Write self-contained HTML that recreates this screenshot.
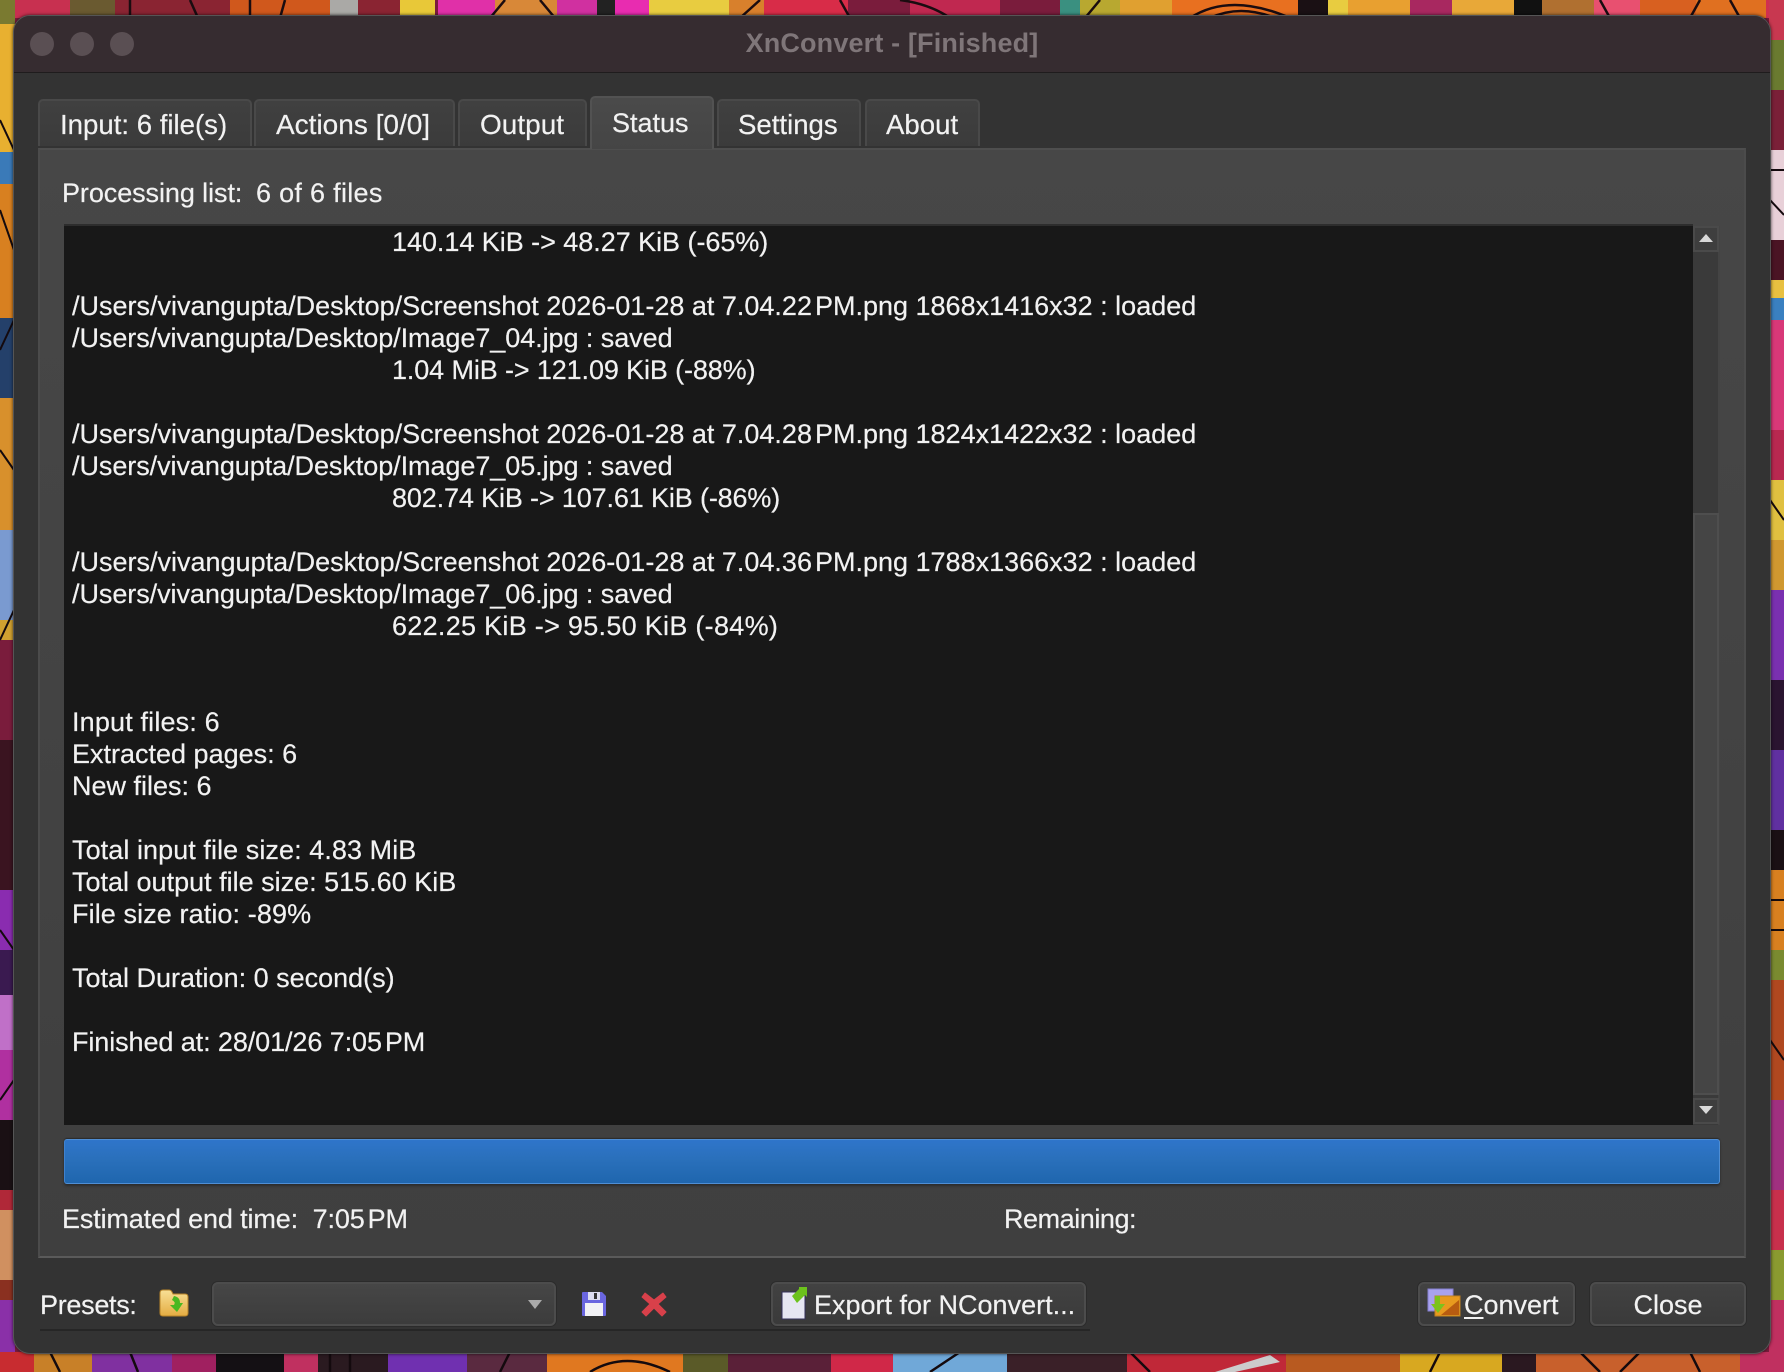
<!DOCTYPE html>
<html><head><meta charset="utf-8"><title>XnConvert</title>
<style>
html,body{margin:0;padding:0;background:#222;}
body{width:1784px;height:1372px;position:relative;overflow:hidden;font-family:"Liberation Sans",sans-serif;font-size:27px;color:#f2f2f2;}
.bg{position:absolute;left:0;top:0;}
.win{position:absolute;left:14px;top:16px;width:1756px;height:1337px;border-radius:16px;background:#333;box-shadow:0 0 0 1px #555,0 0 3px 1px rgba(0,0,0,.7);overflow:hidden;}
.tb{position:absolute;left:0;top:0;width:100%;height:56px;background:#362c30;border-bottom:1.5px solid #1f1c1d;}
.dot{position:absolute;top:16px;width:24px;height:24px;border-radius:50%;background:#5a4f53;}
.title{position:absolute;left:0;right:0;top:11px;text-align:center;color:#7f7679;font-weight:bold;line-height:32px;letter-spacing:.15px;}
.a{position:absolute;white-space:pre;line-height:32px;-webkit-text-stroke:.2px #f2f2f2;}
.tab{position:absolute;top:99px;height:47px;box-sizing:border-box;background:linear-gradient(#404040,#3b3b3b);border:2px solid #494949;border-bottom:none;border-radius:5px 5px 0 0;}
.tab.s{top:96px;height:53px;background:linear-gradient(#4a4a4a,#454545);border-color:#525252;z-index:3;}
.tt{font-size:27.6px;}
.panel{position:absolute;left:38px;top:148px;width:1708px;height:1110px;box-sizing:border-box;background:linear-gradient(#474747,#3f3f3f);border:2px solid #4b4b4b;border-top:2px solid #4e4e4e;border-bottom:2px solid #5a5a5a;}
.log{position:absolute;left:64px;top:226px;width:1629px;height:899px;background:#181818;box-shadow:0 -2px 0 #2d2d2d;}
.sb{position:absolute;left:1693px;top:226px;width:27px;height:899px;background:#3a3a3a;box-shadow:inset -2px 0 0 #444;}
.thumb{position:absolute;left:1693px;top:513px;width:26px;height:582px;box-sizing:border-box;background:#454545;border:2px solid #4e4e4e;}
.sbtn{position:absolute;left:1693px;width:26px;height:26px;box-sizing:border-box;background:#3e3e3e;border:2px solid #4a4a4a;}
.bar{position:absolute;left:64px;top:1139px;width:1656px;height:45px;box-sizing:border-box;border-radius:3px;background:linear-gradient(#2f75ca,#2a70bb 45%,#1f66ae);border:1.5px solid #4f8ed4;border-left-color:#3f82cf;box-shadow:0 -1px 1px #2a2a2a,0 2px 2px #2c2c2c;}
.btn{position:absolute;top:1282px;height:44px;box-sizing:border-box;border-radius:6px;background:linear-gradient(#424242,#3a3a3a);border:2px solid #4c4c4c;box-shadow:0 0 0 1px #2b2b2b;}
.line{position:absolute;left:40px;top:1329px;width:1050px;height:2px;background:#262626;}
svg.ic{position:absolute;}
</style></head>
<body>
<svg class="bg" width="1784" height="1372" viewBox="0 0 1784 1372" xmlns="http://www.w3.org/2000/svg">
<rect width="1784" height="1372" fill="#7a1c3c"/>
<g>
<rect x="0" y="0" width="70" height="18" fill="#c83050"/><rect x="70" y="0" width="45" height="18" fill="#6a5a30"/><rect x="115" y="0" width="115" height="18" fill="#8a2432"/><rect x="230" y="0" width="100" height="18" fill="#d0581c"/><rect x="330" y="0" width="28" height="18" fill="#aaa9a6"/><rect x="358" y="0" width="42" height="18" fill="#8a2432"/><rect x="400" y="0" width="35" height="18" fill="#e8c838"/><rect x="438" y="0" width="57" height="18" fill="#e030a8"/><rect x="495" y="0" width="62" height="18" fill="#d88838"/><rect x="557" y="0" width="40" height="18" fill="#d030a0"/><rect x="597" y="0" width="18" height="18" fill="#222"/><rect x="615" y="0" width="34" height="18" fill="#e82cb0"/><rect x="649" y="0" width="80" height="18" fill="#e8cc40"/><rect x="729" y="0" width="35" height="18" fill="#d8802c"/><rect x="764" y="0" width="84" height="18" fill="#d82c48"/><rect x="848" y="0" width="62" height="18" fill="#7a1c3c"/><rect x="910" y="0" width="90" height="18" fill="#c02850"/><rect x="1000" y="0" width="60" height="18" fill="#7a1c3c"/><rect x="1060" y="0" width="20" height="18" fill="#3a9080"/><rect x="1080" y="0" width="40" height="18" fill="#b8a830"/><rect x="1120" y="0" width="52" height="18" fill="#e0a030"/><rect x="1172" y="0" width="126" height="18" fill="#e87020"/><rect x="1298" y="0" width="30" height="18" fill="#1a1014"/><rect x="1328" y="0" width="20" height="18" fill="#e8cc40"/><rect x="1348" y="0" width="62" height="18" fill="#e8a030"/><rect x="1410" y="0" width="42" height="18" fill="#a82860"/><rect x="1452" y="0" width="62" height="18" fill="#e8a838"/><rect x="1514" y="0" width="28" height="18" fill="#111"/><rect x="1542" y="0" width="52" height="18" fill="#b07030"/><rect x="1594" y="0" width="46" height="18" fill="#e85070"/><rect x="1640" y="0" width="56" height="18" fill="#d86020"/><rect x="1696" y="0" width="70" height="18" fill="#e07020"/><rect x="1766" y="0" width="18" height="18" fill="#d03050"/>
</g>
<g stroke="#1a0c10" stroke-width="2.5" fill="none">
<path d="M130 0V18M190 0L198 18M250 0V18M285 0L280 18M505 0L490 18M540 0L555 18M760 0L740 18M840 0L850 18M900 0Q930 4 950 18M1190 18Q1230 -8 1290 18M1210 18Q1240 4 1275 18M1100 0L1085 18M1600 0L1610 18M1700 0L1690 18M1730 0L1740 18"/>
</g>
<g>
<rect x="0" y="1352" width="34" height="20" fill="#c82c30"/><rect x="34" y="1352" width="58" height="20" fill="#c88028"/><rect x="92" y="1352" width="80" height="20" fill="#8030a0"/><rect x="172" y="1352" width="44" height="20" fill="#a02060"/><rect x="216" y="1352" width="68" height="20" fill="#141014"/><rect x="284" y="1352" width="34" height="20" fill="#c03060"/><rect x="318" y="1352" width="70" height="20" fill="#2a1a20"/><rect x="388" y="1352" width="79" height="20" fill="#7030b0"/><rect x="467" y="1352" width="80" height="20" fill="#5a2a40"/><rect x="547" y="1352" width="136" height="20" fill="#e07820"/><rect x="683" y="1352" width="45" height="20" fill="#5a5a28"/><rect x="728" y="1352" width="103" height="20" fill="#5a2038"/><rect x="831" y="1352" width="62" height="20" fill="#d02848"/><rect x="893" y="1352" width="114" height="20" fill="#70a8d8"/><rect x="1007" y="1352" width="120" height="20" fill="#3a2028"/><rect x="1127" y="1352" width="159" height="20" fill="#c02838"/><path d="M1215 1372L1270 1355L1280 1362L1235 1372Z" fill="#cccccc"/><rect x="1286" y="1352" width="114" height="20" fill="#b85a20"/><rect x="1400" y="1352" width="102" height="20" fill="#d8a820"/><rect x="1502" y="1352" width="34" height="20" fill="#2a1820"/><rect x="1536" y="1352" width="204" height="20" fill="#c8602c"/><rect x="1740" y="1352" width="44" height="20" fill="#c03060"/>
</g>
<g stroke="#140a0e" stroke-width="2.5" fill="none">
<path d="M50 1352L60 1372M130 1352L138 1372M330 1352V1372M350 1352V1372M510 1352L500 1372M590 1372Q625 1350 670 1372M960 1352L930 1372M1130 1352L1150 1372M1440 1352L1430 1372M1580 1352L1600 1372M1640 1352L1620 1372M1690 1352L1700 1372"/>
</g>
<g>
<rect x="0" y="0" width="15" height="24" fill="#7a7a30"/><rect x="0" y="24" width="15" height="128" fill="#e8b030"/><rect x="0" y="152" width="15" height="32" fill="#3a7ab8"/><rect x="0" y="184" width="15" height="134" fill="#d88020"/><rect x="0" y="318" width="15" height="80" fill="#24406a"/><rect x="0" y="398" width="15" height="132" fill="#d8902c"/><rect x="0" y="530" width="15" height="90" fill="#7a9ad0"/><rect x="0" y="620" width="15" height="20" fill="#d0a030"/><rect x="0" y="640" width="15" height="100" fill="#7a1c3c"/><rect x="0" y="740" width="15" height="150" fill="#3a1420"/><rect x="0" y="890" width="15" height="60" fill="#8a2cb0"/><rect x="0" y="950" width="15" height="45" fill="#3a1a50"/><rect x="0" y="995" width="15" height="55" fill="#c070c8"/><rect x="0" y="1050" width="15" height="70" fill="#b030a0"/><rect x="0" y="1120" width="15" height="70" fill="#1a1014"/><rect x="0" y="1190" width="15" height="20" fill="#b02838"/><rect x="0" y="1210" width="15" height="70" fill="#d09060"/><rect x="0" y="1280" width="15" height="20" fill="#8a3020"/><rect x="0" y="1300" width="15" height="52" fill="#8a30a8"/>
</g>
<g>
<rect x="1769" y="0" width="15" height="40" fill="#c83850"/><rect x="1769" y="40" width="15" height="50" fill="#6a7a30"/><rect x="1769" y="90" width="15" height="60" fill="#7a2038"/><rect x="1769" y="150" width="15" height="90" fill="#e8d0d8"/><rect x="1769" y="240" width="15" height="40" fill="#4a1424"/><rect x="1769" y="280" width="15" height="18" fill="#e8c040"/><rect x="1769" y="298" width="15" height="22" fill="#3a80c0"/><rect x="1769" y="320" width="15" height="110" fill="#d83878"/><rect x="1769" y="430" width="15" height="50" fill="#b82850"/><rect x="1769" y="480" width="15" height="60" fill="#e0c040"/><rect x="1769" y="540" width="15" height="50" fill="#d09830"/><rect x="1769" y="590" width="15" height="90" fill="#7a30b0"/><rect x="1769" y="680" width="15" height="70" fill="#2a1430"/><rect x="1769" y="750" width="15" height="80" fill="#6030a0"/><rect x="1769" y="830" width="15" height="40" fill="#1a1014"/><rect x="1769" y="870" width="15" height="80" fill="#d88020"/><rect x="1769" y="950" width="15" height="30" fill="#7a8a30"/><rect x="1769" y="980" width="15" height="120" fill="#b04820"/><rect x="1769" y="1100" width="15" height="90" fill="#a03080"/><rect x="1769" y="1190" width="15" height="60" fill="#c8304c"/><rect x="1769" y="1250" width="15" height="50" fill="#8a9a30"/><rect x="1769" y="1300" width="15" height="72" fill="#c03060"/>
</g>
<g stroke="#140a0e" stroke-width="2" fill="none">
<path d="M0 120L14 150M0 210L14 250M0 350L14 320M0 450L14 470M0 640L14 610M0 930L14 950M0 1100L14 1080M1770 170H1784M1770 200L1784 215M1770 500L1784 520M1770 900H1784M1770 930H1784M1770 1040L1784 1060"/>
</g>
</svg>

<div class="win">
<div class="tb"></div>
<div class="dot" style="left:16px"></div><div class="dot" style="left:56px"></div><div class="dot" style="left:96px"></div>
<div class="title">XnConvert - [Finished]</div>
</div>

<div class="tab" style="left:38px;width:214px"></div>
<div class="tab" style="left:254px;width:201px"></div>
<div class="tab" style="left:458px;width:129px"></div>
<div class="tab s" style="left:590px;width:124px"></div>
<div class="tab" style="left:717px;width:144px"></div>
<div class="tab" style="left:865px;width:115px"></div>
<div class="panel"></div>

<div class="a tt" style="left:60px;top:109px;z-index:4">Input: 6 file(s)</div>
<div class="a tt" style="left:276px;top:109px;z-index:4;font-size:28px">Actions [0/0]</div>
<div class="a tt" style="left:480px;top:109px;z-index:4;font-size:28px">Output</div>
<div class="a" style="left:612px;top:107px;z-index:4">Status</div>
<div class="a tt" style="left:738px;top:109px;z-index:4">Settings</div>
<div class="a tt" style="left:886px;top:109px;z-index:4">About</div>

<div class="a" style="left:62px;top:177px;letter-spacing:-.08px">Processing list:</div>
<div class="a" style="left:256px;top:177px;letter-spacing:.3px">6 of 6 files</div>

<div class="log"></div>
<div class="a" style="left:72px;top:226px;width:1620px;height:898px;overflow:hidden"><span style="margin-left:320px;letter-spacing:-.04px">140.14 KiB -&gt; 48.27 KiB (-65%)</span>

/Users/vivangupta/Desktop/Screenshot 2026-01-28 at 7.04.22<span style="margin-left:3px">PM</span>.png 1868x1416x32 : loaded
<span style="letter-spacing:-.06px">/Users/vivangupta/Desktop/Image7_04.jpg : saved</span>
<span style="margin-left:320px;letter-spacing:-.12px">1.04 MiB -&gt; 121.09 KiB (-88%)</span>

/Users/vivangupta/Desktop/Screenshot 2026-01-28 at 7.04.28<span style="margin-left:3px">PM</span>.png 1824x1422x32 : loaded
<span style="letter-spacing:-.06px">/Users/vivangupta/Desktop/Image7_05.jpg : saved</span>
<span style="margin-left:320px;letter-spacing:-.14px">802.74 KiB -&gt; 107.61 KiB (-86%)</span>

/Users/vivangupta/Desktop/Screenshot 2026-01-28 at 7.04.36<span style="margin-left:3px">PM</span>.png 1788x1366x32 : loaded
<span style="letter-spacing:-.06px">/Users/vivangupta/Desktop/Image7_06.jpg : saved</span>
<span style="margin-left:320px;letter-spacing:.29px">622.25 KiB -&gt; 95.50 KiB (-84%)</span>


<span style="letter-spacing:.16px">Input files: 6</span>
Extracted pages: 6
New files: 6

<span style="letter-spacing:.07px">Total input file size: 4.83 MiB</span>
Total output file size: 515.60 KiB
<span style="letter-spacing:.1px">File size ratio: -89%</span>

Total Duration: 0 second(s)

<span style="letter-spacing:-.09px">Finished at: 28/01/26 7:05<span style="margin-left:3px">PM</span></span></div>

<div class="sb"></div>
<div class="thumb"></div>
<div class="sbtn" style="top:226px"></div>
<div class="sbtn" style="top:1098px"></div>
<svg class="ic" style="left:1696px;top:230px" width="20" height="16"><path d="M3 12L10 4L17 12Z" fill="#d8d8d8"/></svg>
<svg class="ic" style="left:1696px;top:1102px" width="20" height="16"><path d="M3 4L10 12L17 4Z" fill="#d8d8d8"/></svg>

<div class="bar"></div>

<div class="a" style="left:62px;top:1203px;letter-spacing:-.14px">Estimated end time:  7:05<span style="margin-left:3px">PM</span></div>
<div class="a" style="left:1004px;top:1203px;letter-spacing:-.45px">Remaining:</div>

<div class="line"></div>
<div class="a" style="left:40px;top:1289px;letter-spacing:-.3px">Presets:</div>

<svg class="ic" style="left:159px;top:1289px" width="30" height="29" viewBox="0 0 30 29">
<defs><linearGradient id="f" x1="0" y1="0" x2="0" y2="1"><stop offset="0" stop-color="#f8e096"/><stop offset="1" stop-color="#e4ac42"/></linearGradient></defs>
<path d="M1 4Q1 1 4 1H10Q12 1 13 3L14 5H26Q29 5 29 8V24Q29 27 26 27H4Q1 27 1 24Z" fill="url(#f)" stroke="#b88428"/>
<path d="M15 7Q21 8 21 14H24L18 23L11 16H15Q17 13 13 11Z" fill="#49b821"/>
</svg>

<div class="btn" style="left:212px;width:344px;background:linear-gradient(#464646,#3c3c3c)"></div>
<svg class="ic" style="left:526px;top:1298px" width="18" height="12"><path d="M2 2H16L9 11Z" fill="#aaa"/></svg>

<svg class="ic" style="left:581px;top:1291px" width="26" height="26" viewBox="0 0 26 26">
<path d="M1 2Q1 1 2 1H21L25 5V24Q25 25 24 25H2Q1 25 1 24Z" fill="#6a66e0"/>
<rect x="7" y="1" width="12" height="8" fill="#dcdcf0"/><rect x="13" y="2" width="3" height="6" fill="#333"/>
<rect x="4" y="12" width="18" height="13" fill="#f2f2f6"/>
</svg>

<svg class="ic" style="left:640px;top:1290px" width="28" height="28" viewBox="0 0 28 28">
<path d="M5 3L14 10L23 3L26 7L18 14L26 22L22 26L14 18L6 26L2 22L10 14L2 7Z" fill="#d8404a" stroke="#d8404a" stroke-width="1" stroke-linejoin="round"/>
</svg>

<div class="btn" style="left:771px;width:315px"></div>
<svg class="ic" style="left:780px;top:1287px" width="30" height="34" viewBox="0 0 30 34">
<rect x="2" y="5" width="23" height="27" fill="#e6e6f2" stroke="#34305a"/>
<path d="M12 9L19 2V0H27V10L25 8L17 16Z" fill="#6cc21c"/>
</svg>
<div class="a" style="left:814px;top:1289px;z-index:2">Export for NConvert...</div>

<div class="btn" style="left:1418px;width:157px"></div>
<svg class="ic" style="left:1427px;top:1288px" width="34" height="30" viewBox="0 0 34 30">
<rect x="1" y="1" width="25" height="22" fill="#a9a2ee" stroke="#8580d0"/>
<rect x="8" y="8" width="25" height="20" fill="#e89a1e" stroke="#c08020"/>
<path d="M14 27L32 12V27Z" fill="#b85c10"/>
<path d="M8 8V16H4L11 25L18 16H13V8Z" fill="#7cc21c"/>
</svg>
<div class="a" style="left:1464px;top:1289px;z-index:2"><u style="text-underline-offset:3px">C</u>onvert</div>

<div class="btn" style="left:1590px;width:156px"></div>
<div class="a" style="left:1590px;width:156px;text-align:center;top:1289px;z-index:2">Close</div>
</body></html>
